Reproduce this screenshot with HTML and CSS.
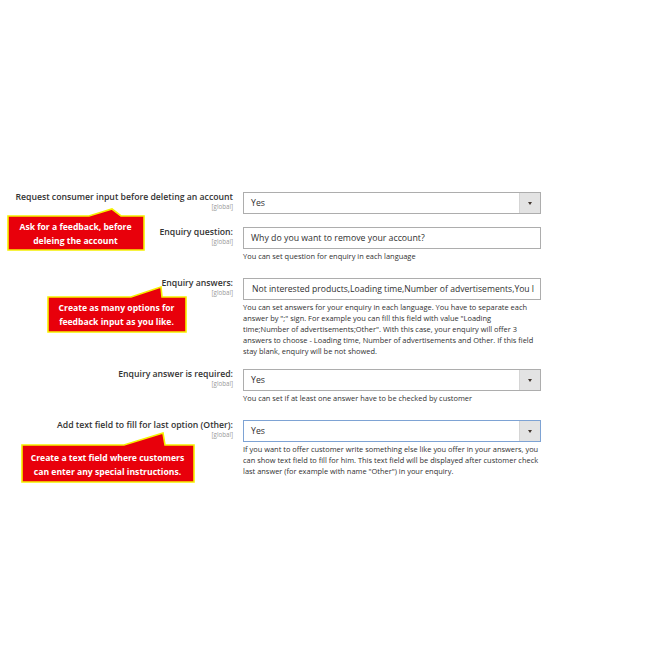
FILE: index.html
```html
<!DOCTYPE html>
<html>
<head>
<meta charset="utf-8">
<link rel="stylesheet" href="styles.css">
</head>
<body>
<div class="page">
  <div class="form">
    <div class="row">
      <div class="label"><span class="label-text">Request consumer input before deleting an account</span><span class="scope">[global]</span></div>
      <div class="control">
        <div class="select"><span class="select-value">Yes</span><span class="select-btn"><span class="arrow"></span></span></div>
      </div>
    </div>
    <div class="row row--gap">
      <div class="label"><span class="label-text">Enquiry question:</span><span class="scope">[global]</span></div>
      <div class="control">
        <div class="input">Why do you want to remove your account?</div>
        <div class="note">You can set question for enquiry in each language</div>
      </div>
    </div>
    <div class="row row--tight">
      <div class="label"><span class="label-text">Enquiry answers:</span><span class="scope">[global]</span></div>
      <div class="control">
        <div class="input input--center">Not interested products,Loading time,Number of advertisements,You l</div>
        <div class="note">You can set answers for your enquiry in each language. You have to separate each<br>answer by ";" sign. For example you can fill this field with value "Loading<br>time;Number of advertisements;Other". With this case, your enquiry will offer 3<br>answers to choose - Loading time, Number of advertisements and Other. If this field<br>stay blank, enquiry will be not showed.</div>
      </div>
    </div>
    <div class="row row--gap">
      <div class="label"><span class="label-text">Enquiry answer is required:</span><span class="scope">[global]</span></div>
      <div class="control">
        <div class="select"><span class="select-value">Yes</span><span class="select-btn"><span class="arrow"></span></span></div>
        <div class="note">You can set if at least one answer have to be checked by customer</div>
      </div>
    </div>
    <div class="row">
      <div class="label"><span class="label-text">Add text field to fill for last option (Other):</span><span class="scope">[global]</span></div>
      <div class="control">
        <div class="select select--focus"><span class="select-value">Yes</span><span class="select-btn"><span class="arrow"></span></span></div>
        <div class="note">If you want to offer customer write something else like you offer in your answers, you can show text field to fill for him. This text field will be displayed after customer check last answer (for example with name "Other") in your enquiry.</div>
      </div>
    </div>
  </div>

  <div class="callout callout--one">
    <svg class="callout-shape" width="140" height="44" viewBox="0 0 140 44"><polygon points="1,8 82,8 105,1 114,8 137,8 137,42 1,42" /></svg>
    <div class="callout-text">Ask for a feedback, before<br>deleing the account</div>
  </div>
  <div class="callout callout--two">
    <svg class="callout-shape" width="142" height="48" viewBox="0 0 142 48"><polygon points="1,11 84,11 114,1 115,11 139,11 139,46 1,46" /></svg>
    <div class="callout-text">Create as many options for<br>feedback input as you like.</div>
  </div>
  <div class="callout callout--three">
    <svg class="callout-shape" width="176" height="52" viewBox="0 0 176 52"><polygon points="1,13 103,13 142,1 144,13 173,13 173,50 1,50" /></svg>
    <div class="callout-text">Create a text field where customers<br>can enter any special instructions.</div>
  </div>
</div>
</body>
</html>
```

FILE: styles.css
```css
html, body {
  margin: 0;
  padding: 0;
  background: #ffffff;
}
body {
  font-family: "Open Sans", "Liberation Sans", sans-serif;
  color: #303030;
}
.page {
  position: relative;
  width: 670px;
  height: 670px;
  overflow: hidden;
}
.form {
  padding-top: 192px;
}
.row {
  display: grid;
  grid-template-columns: 233px 298px;
  column-gap: 10px;
  margin-bottom: 13px;
}
.row--gap {
  margin-bottom: 16px;
}
.row--tight {
  margin-bottom: 12px;
}
.label {
  display: flex;
  flex-direction: column;
  align-items: flex-end;
  text-align: right;
}
.label-text {
  font-size: 8.7px;
  font-weight: 600;
  line-height: 11px;
  color: #333333;
  white-space: nowrap;
}
.scope {
  font-size: 6.2px;
  line-height: 8px;
  color: #999999;
}
.control {
  display: flex;
  flex-direction: column;
}
.input, .select {
  box-sizing: border-box;
  height: 22px;
  border: 1px solid #adadad;
  background: #ffffff;
  font-size: 8.75px;
  line-height: 20px;
  color: #303030;
  white-space: nowrap;
  overflow: hidden;
}
.input {
  padding: 0 7px;
}
.input--center {
  padding-left: 8px;
  font-size: 8.6px;
}
.select {
  display: flex;
  justify-content: space-between;
}
.select--focus {
  border-color: #7ea3d4;
}
.select-value {
  padding-left: 7px;
}
.select-btn {
  width: 20px;
  background: #e3e3e3;
  border-left: 1px solid #d5d5d5;
  display: flex;
  align-items: center;
  justify-content: center;
}
.arrow {
  width: 0;
  height: 0;
  border-left: 2.5px solid transparent;
  border-right: 2.5px solid transparent;
  border-top: 3px solid #41362f;
}
.note {
  margin-top: 2px;
  font-size: 7.45px;
  line-height: 11px;
  color: #303030;
}
.callout {
  position: absolute;
}
.callout-shape {
  display: block;
}
.callout-shape polygon {
  fill: #e8000b;
  stroke: #f5f000;
  stroke-width: 1.6;
  stroke-linejoin: miter;
}
.callout-text {
  position: absolute;
  left: 0;
  right: 0;
  bottom: 0;
  text-align: center;
  color: #ffffff;
  font-weight: 700;
  font-size: 8.6px;
  line-height: 13.5px;
  white-space: nowrap;
}
.callout--one {
  left: 7px;
  top: 208px;
}
.callout--one .callout-text {
  padding-bottom: 4px;
  padding-right: 3px;
}
.callout--two {
  left: 47px;
  top: 286px;
}
.callout--two .callout-text {
  padding-bottom: 5px;
  padding-right: 3px;
}
.callout--three {
  left: 21px;
  top: 432px;
}
.callout--three .callout-text {
  padding-bottom: 5px;
  padding-right: 3px;
}
```
